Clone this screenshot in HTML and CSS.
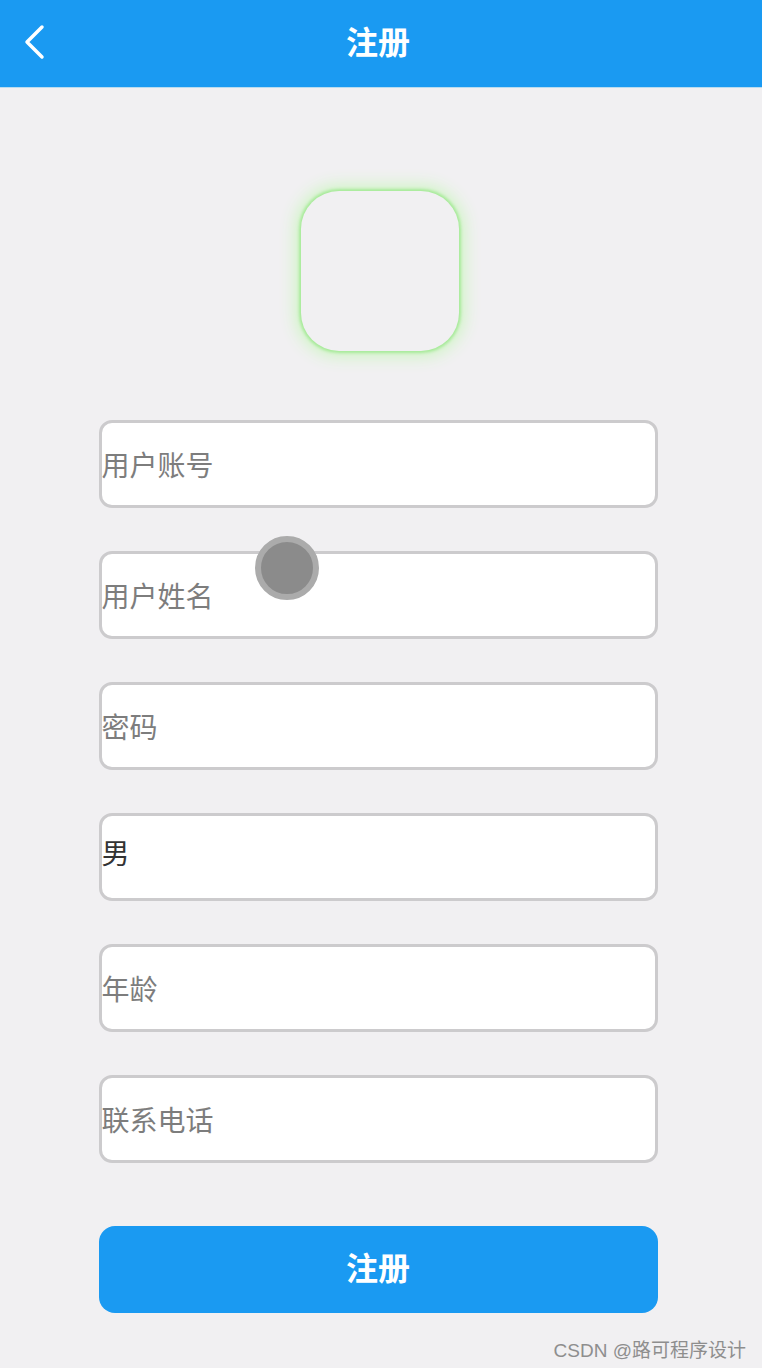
FILE: index.html
```html
<!DOCTYPE html>
<html lang="zh">
<head>
    <meta charset="UTF-8">
    <meta name="viewport" content="width=device-width, initial-scale=1.0">
    <title>注册</title>
    <link rel="stylesheet" href="styles.css">
</head>
<body>
    <div class="header">
        <span class="back">
            <svg width="24" height="36" viewBox="0 0 24 36">
                <path d="M20 3 L5 18 L20 33" fill="none" stroke="#fff" stroke-width="3.5" stroke-linecap="round" stroke-linejoin="round"/>
            </svg>
        </span>
        <h1>注册</h1>
    </div>

    <div class="content">
        <div class="avatar"></div>

        <form class="form">
            <div class="field"><span class="placeholder">用户账号</span></div>
            <div class="field"><span class="placeholder">用户姓名</span><span class="touch"></span></div>
            <div class="field"><span class="placeholder">密码</span></div>
            <div class="field"><span class="value">男</span></div>
            <div class="field"><span class="placeholder">年龄</span></div>
            <div class="field"><span class="placeholder">联系电话</span></div>
            <button type="button" class="submit">注册</button>
        </form>

        <div class="watermark">CSDN @路可程序设计</div>
    </div>
</body>
</html>
```

FILE: styles.css
```css
body {
    margin: 0;
    font-family: "Noto Sans CJK SC", "Noto Sans", sans-serif;
    background-color: #f1f0f2;
    height: 1368px;
    overflow: hidden;
}

.header {
    height: 87px;
    background-color: #1a9af2;
    display: flex;
    align-items: center;
    justify-content: center;
    position: relative;
    border-bottom: 1px solid #b9dcf0;
}

.header h1 {
    margin: 0 6px 8px 0;
    color: #fff;
    font-size: 32px;
    font-weight: bold;
}

.back {
    position: absolute;
    left: 22px;
    top: 24px;
    display: flex;
}

.content {
    display: flex;
    flex-direction: column;
    align-items: center;
    padding-top: 103px;
    padding-right: 6px;
    height: 1177px;
    border-bottom: 2px solid #e6e6e8;
}

.avatar {
    width: 158px;
    height: 160px;
    margin-left: 4px;
    border-radius: 38px;
    background-color: #f1f0f2;
    box-shadow: 0 0 3px 2px #a6ea98, 0 0 16px 6px #cff5c4;
}

.form {
    margin-top: 69px;
    display: flex;
    flex-direction: column;
    gap: 43px;
    width: 559px;
}

.field {
    box-sizing: border-box;
    height: 88px;
    border: 3px solid #cccbcd;
    border-radius: 13px;
    background-color: #fff;
    display: flex;
    align-items: center;
    position: relative;
}

.placeholder,
.value {
    font-size: 28px;
    color: #7d7d7d;
}

.value {
    color: #333;
    margin-top: -10px;
}

.touch {
    position: absolute;
    left: 153px;
    top: -18px;
    width: 52px;
    height: 52px;
    border-radius: 50%;
    background-color: #8b8b8b;
    border: 6px solid #ababab;
}

.submit {
    margin-top: 20px;
    height: 87px;
    padding-bottom: 8px;
    border: none;
    border-radius: 16px;
    background-color: #1a9af2;
    color: #fff;
    font-family: inherit;
    font-size: 32px;
    font-weight: bold;
}

.watermark {
    align-self: flex-end;
    margin-top: auto;
    margin-right: 10px;
    margin-bottom: 6px;
    font-family: "Liberation Sans", "Noto Sans CJK SC", sans-serif;
    font-size: 19px;
    color: #8e8e8e;
}
```
